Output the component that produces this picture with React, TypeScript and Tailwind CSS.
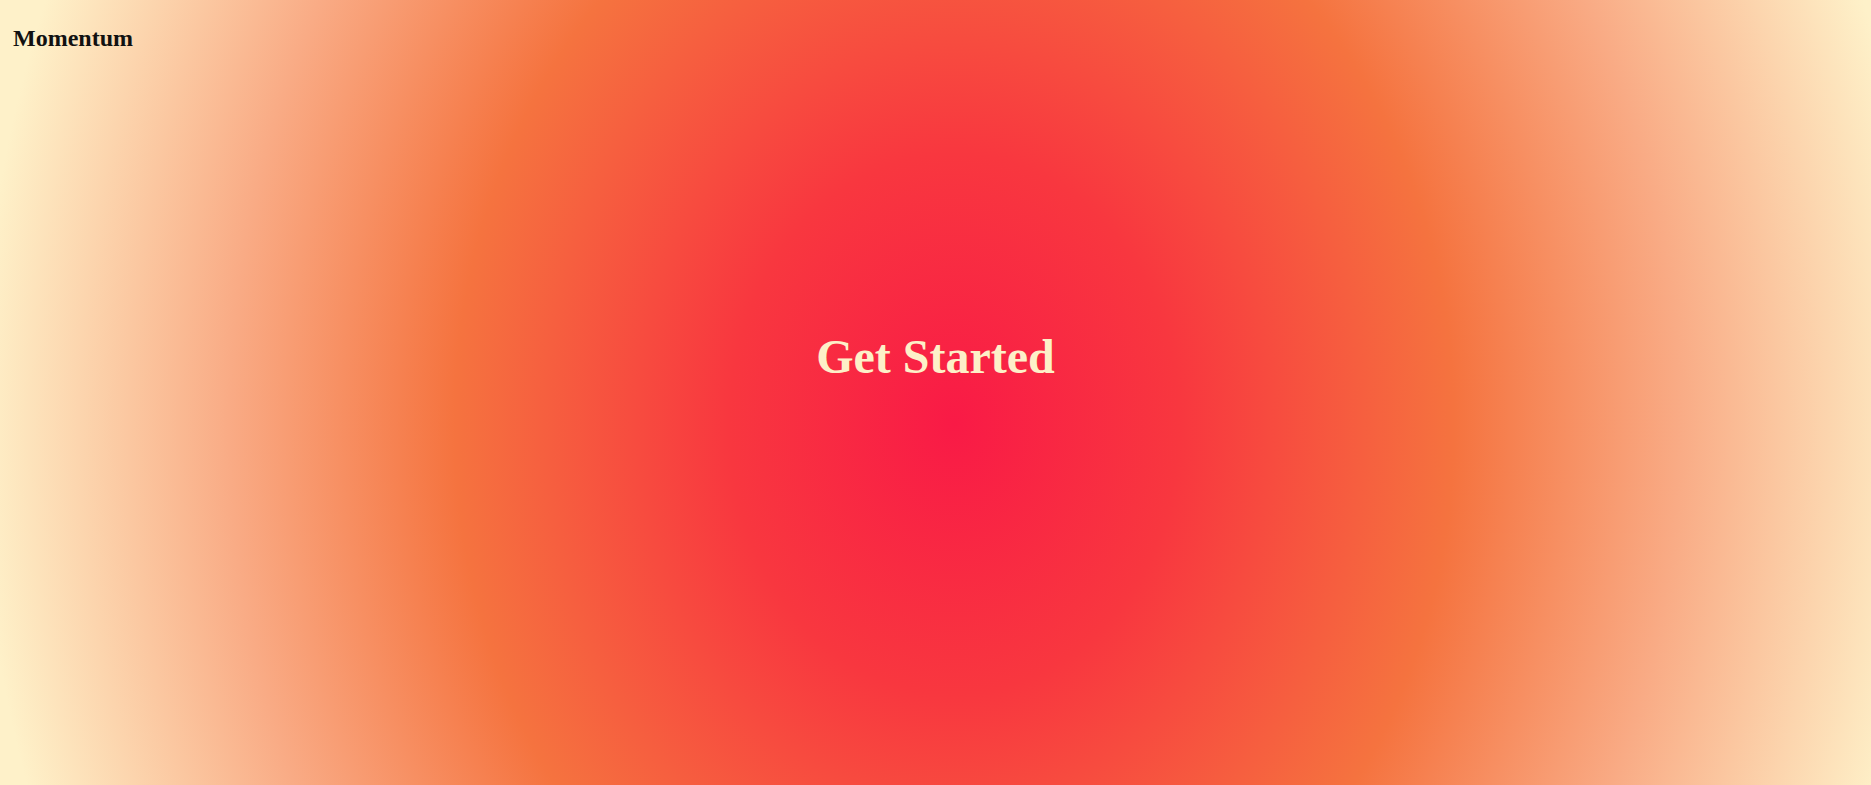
import React from 'react';

const serif = { fontFamily: '"Liberation Serif", "Times New Roman", serif' };

export default function App() {
  return (
    <div
      className="relative h-screen w-full overflow-hidden bg-[radial-gradient(ellipse_500px_600px_at_51%_54%,#f91a46_0%,#f8373f_45%,#f5733f_100%,#f9ab85_145%,#fef1c9_195%)]"
      style={serif}
    >
      <header className="pl-[13px] pt-[22px]">
        <h1 className="text-2xl font-bold text-[#111]">Momentum</h1>
      </header>
      <main className="flex justify-center pt-[279px]">
        <h2 className="text-5xl leading-none font-bold text-[#fdf0c8]">Get Started</h2>
      </main>
    </div>
  );
}
